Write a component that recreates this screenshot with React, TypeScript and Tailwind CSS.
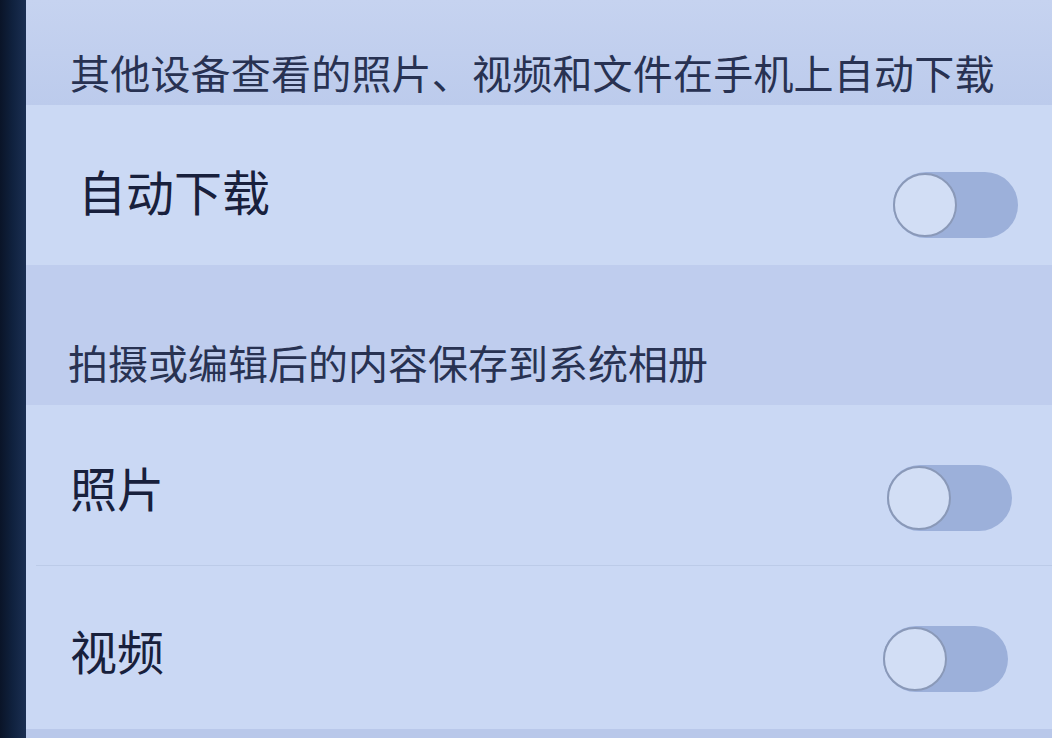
import { useState } from 'react';

const FONT = '"Noto Sans CJK SC", "Noto Sans", sans-serif';

function Toggle({ on, onChange }: { on: boolean; onChange: () => void }) {
  return (
    <button
      onClick={onChange}
      className={`relative w-[125px] h-[66px] rounded-full ${on ? 'bg-[#4a7bd8]' : 'bg-[#9cb0da]'}`}
    >
      <span
        className={`absolute top-px w-[64px] h-[64px] rounded-full bg-[#d2def5] border-[2px] border-[#8a99b8] ${
          on ? 'right-px' : 'left-0'
        }`}
      />
    </button>
  );
}

export default function App() {
  const [autoDownload, setAutoDownload] = useState(false);
  const [photos, setPhotos] = useState(false);
  const [videos, setVideos] = useState(false);

  return (
    <div className="flex w-[1052px] h-[738px] overflow-hidden" style={{ fontFamily: FONT }}>
      {/* phone edge */}
      <div className="w-[26px] shrink-0 bg-gradient-to-r from-[#0a1428] via-[#10223f] to-[#1b2f52]" />

      <div className="flex-1 flex flex-col bg-[#cad8f4]">
        {/* section: sync */}
        <div className="h-[105px] shrink-0 bg-gradient-to-b from-[#c6d3f0] to-[#bccbec] pl-[44px] pt-[52px]">
          <p className="text-[40px] leading-none text-[#283252] tracking-[0.2px]">
            其他设备查看的照片、视频和文件在手机上自动下载
          </p>
        </div>

        <div className="h-[160px] shrink-0 flex justify-between pl-[52px] pr-[34px] bg-[#cbd9f4]">
          <span className="pt-[61px] text-[48px] leading-none text-[#18203c]">自动下载</span>
          <div className="pt-[67px]">
            <Toggle on={autoDownload} onChange={() => setAutoDownload((v) => !v)} />
          </div>
        </div>

        {/* section: album */}
        <div className="h-[140px] shrink-0 bg-[#bfcdee] pl-[42px] pt-[77px]">
          <p className="text-[40px] leading-none text-[#283252]">拍摄或编辑后的内容保存到系统相册</p>
        </div>

        <div className="h-[160px] shrink-0 flex justify-between pl-[44px] pr-[40px]">
          <span className="pt-[58px] text-[47px] leading-none text-[#18203c]">照片</span>
          <div className="pt-[60px]">
            <Toggle on={photos} onChange={() => setPhotos((v) => !v)} />
          </div>
        </div>

        <div className="h-px shrink-0 ml-[10px] bg-[#bccbe8]" />

        <div className="h-[163px] shrink-0 flex justify-between pl-[44px] pr-[44px]">
          <span className="pt-[60px] text-[47px] leading-none text-[#18203c]">视频</span>
          <div className="pt-[60px]">
            <Toggle on={videos} onChange={() => setVideos((v) => !v)} />
          </div>
        </div>

        <div className="flex-1 bg-[#b9c8ea]" />
      </div>
    </div>
  );
}
